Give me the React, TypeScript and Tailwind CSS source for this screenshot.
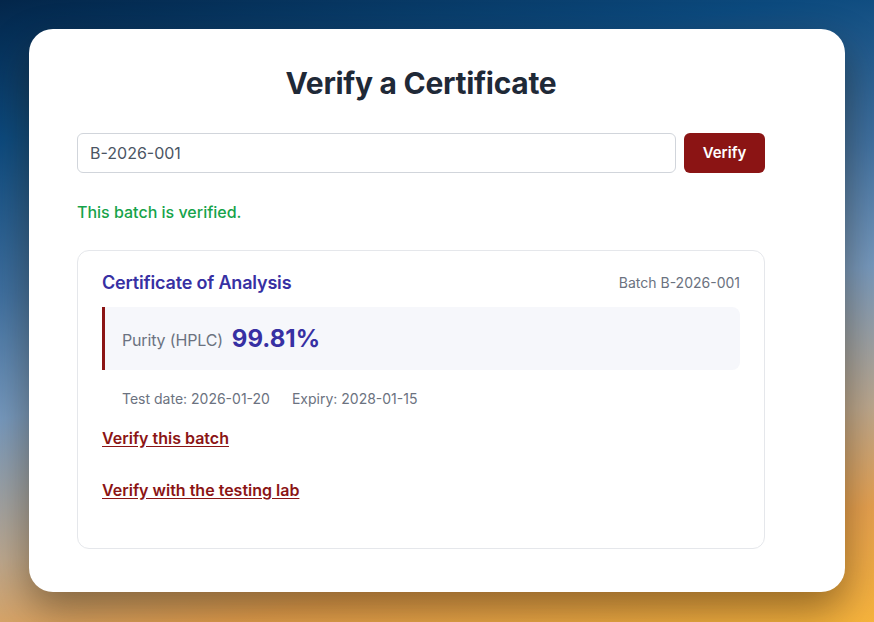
import React, { useState } from 'react'

export default function App() {
  const [batch, setBatch] = useState('B-2026-001')

  return (
    <section className="min-h-screen w-full p-[29px] font-['Inter','Liberation_Sans',sans-serif] bg-[linear-gradient(170deg,#03264a_0%,#0c4a7e_18%,#3f70a0_38%,#7699be_54%,#bca88f_72%,#e6a150_85%,#f7b43c_100%)]">
      <div className="w-full bg-white rounded-[24px] shadow-[0_18px_40px_rgba(40,25,0,0.45)] px-12 pt-9 pb-[43px]">
        <div className="max-w-[688px]">
          <h1 className="text-center text-[30px] leading-9 font-bold text-[#1f2937] tracking-[-0.01em]">
            Verify a Certificate
          </h1>

          <form
            onSubmit={e => e.preventDefault()}
            className="mt-8 flex gap-2"
          >
            <input
              value={batch}
              onChange={e => setBatch(e.target.value)}
              className="flex-1 h-10 rounded-md border border-[#d1d5db] px-3 text-base text-[#4b5563] focus:outline-none"
            />
            <button
              type="submit"
              className="h-10 w-[81px] rounded-md bg-[#8b1414] text-white text-[15px] font-semibold"
            >
              Verify
            </button>
          </form>

          <p className="mt-[27px] text-base leading-6 font-medium text-[#16a34a]">
            This batch is verified.
          </p>

          <div className="mt-[26px] h-[299px] rounded-xl border border-[#e5e7eb] px-6 pt-[18px]">
            <div className="flex items-center justify-between">
              <h2 className="text-lg leading-7 font-semibold text-[#3730a3] tracking-[-0.01em]">
                Certificate of Analysis
              </h2>
              <span className="text-sm text-[#6b7280]">Batch B-2026-001</span>
            </div>

            <div className="mt-[10px] h-[63px] flex items-center gap-[9px] border-l-[3px] border-[#8b1414] rounded-r-lg bg-[#f6f7fb] pl-[17px]">
              <span className="text-base text-[#6b7280] mt-[2px] tracking-[-0.01em]">Purity (HPLC)</span>
              <span className="text-2xl font-bold text-[#3730a3]">99.81%</span>
            </div>

            <div className="mt-[19px] pl-5 flex gap-[22px] text-sm leading-5 text-[#6b7280]">
              <span>Test date: 2026-01-20</span>
              <span>Expiry: 2028-01-15</span>
            </div>

            <div className="mt-[17px] flex flex-col gap-7 items-start">
              <a href="#" className="text-base leading-6 font-semibold text-[#8b1414] underline underline-offset-2">
                Verify this batch
              </a>
              <a href="#" className="text-base leading-6 font-semibold text-[#8b1414] underline underline-offset-2">
                Verify with the testing lab
              </a>
            </div>
          </div>
        </div>
      </div>
    </section>
  )
}
